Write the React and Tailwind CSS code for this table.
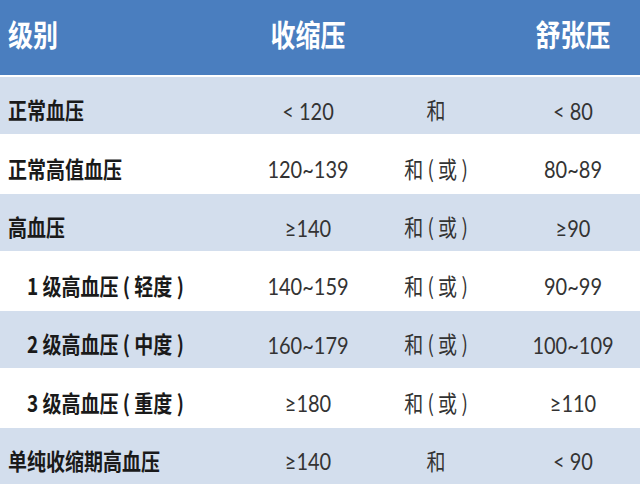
import React from "react";

const cjk = { fontFamily: '"Noto Sans CJK SC", "Noto Sans", sans-serif' };
const num = { fontFamily: 'Lato, "Noto Sans CJK SC", sans-serif' };

const rows = [
  { label: "正常血压", indent: false, s: "< 120", op: "和", d: "< 80" },
  { label: "正常高值血压", indent: false, s: "120~139", op: "和 ( 或 )", d: "80~89" },
  { label: "高血压", indent: false, s: "≥140", op: "和 ( 或 )", d: "≥90" },
  { label: "1 级高血压 ( 轻度 )", indent: true, s: "140~159", op: "和 ( 或 )", d: "90~99" },
  { label: "2 级高血压 ( 中度 )", indent: true, s: "160~179", op: "和 ( 或 )", d: "100~109" },
  { label: "3 级高血压 ( 重度 )", indent: true, s: "≥180", op: "和 ( 或 )", d: "≥110" },
  { label: "单纯收缩期高血压", indent: false, s: "≥140", op: "和", d: "< 90" },
];

const heights = ["h-[57px]", "h-[60px]", "h-[57px]", "h-[60px]", "h-[57px]", "h-[60px]", "h-[56px]"];

export default function App() {
  return (
    <div className="w-[640px] h-[485px] bg-white overflow-hidden" style={cjk}>
      <div className="grid grid-cols-[250px_116px_140px_134px] h-[75px] bg-[#4a7ebf] text-white font-bold text-[25px] items-center pb-2">
        <div className="pl-2"><span className="inline-block scale-y-[1.2]">级别</span></div>
        <div className="text-center"><span className="inline-block scale-y-[1.2]">收缩压</span></div>
        <div />
        <div className="text-center"><span className="inline-block scale-y-[1.2]">舒张压</span></div>
      </div>
      <div className="h-[2px]" />
      {rows.map((r, i) => (
        <div
          key={i}
          className={`grid grid-cols-[250px_116px_140px_134px] items-center pt-2 ${heights[i]} ${i % 2 === 0 ? "bg-[#d3deed]" : "bg-white"}`}
        >
          <div className={`${r.indent ? "pl-[27px]" : "pl-2"} text-[19px] font-bold text-[#1a1a1a]`}>
            <span className="inline-block scale-y-[1.2] whitespace-pre">{r.label}</span>
          </div>
          <div className="text-center text-[20px] text-[#333]" style={num}>
            <span className="inline-block scale-y-[1.2] whitespace-pre">{r.s}</span>
          </div>
          <div className="text-center text-[19px] text-[#333]">
            <span className="inline-block scale-y-[1.2] whitespace-pre">{r.op}</span>
          </div>
          <div className="text-center text-[20px] text-[#333]" style={num}>
            <span className="inline-block scale-y-[1.2] whitespace-pre">{r.d}</span>
          </div>
        </div>
      ))}
    </div>
  );
}
